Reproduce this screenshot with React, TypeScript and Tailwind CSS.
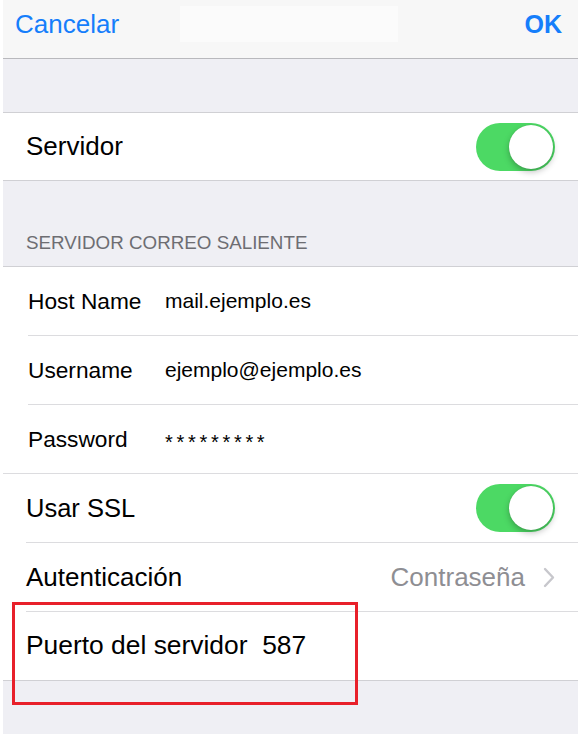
import React from "react";

function Toggle() {
  return (
    <div className="relative w-[79px] h-[48px] rounded-full bg-[#4cd964] shrink-0">
      <div className="absolute right-[2px] top-[2px] w-[44px] h-[44px] rounded-full bg-white shadow-[0_3px_6px_rgba(0,0,0,0.25),0_0_1px_rgba(0,0,0,0.2)]" />
    </div>
  );
}

function FieldRow({ label, value, mono }: { label: string; value: string; mono?: boolean }) {
  return (
    <div className="h-[68px] flex items-center pl-[25px]">
      <div className="w-[137px] text-[22.7px] text-black shrink-0">{label}</div>
      <div className={mono ? "text-[20px] tracking-[3.7px] text-black pt-[6px]" : "text-[21px] text-black"}>
        {value}
      </div>
    </div>
  );
}

export default function App() {
  return (
    <div
      className="relative w-[583px] h-[734px] bg-white overflow-hidden"
      style={{ fontFamily: '"Liberation Sans", Arial, sans-serif' }}
    >
      <div className="ml-[3px] w-[575px] h-full bg-[#efeff4] flex flex-col">
        {/* Nav */}
        <div className="h-[59px] bg-[#f7f7f7] border-b border-[#b9b9bd] flex items-center justify-between pl-[12px] pr-[16px] relative">
          <span className="text-[26px] text-[#157efb] -mt-[9px]">Cancelar</span>
          <div className="absolute left-[177px] top-[6px] w-[218px] h-[36px] bg-[#fbfbfb]" />
          <span className="text-[25px] font-bold text-[#157efb] -mt-[9px]">OK</span>
        </div>

        {/* spacer */}
        <div className="h-[53px]" />

        {/* Servidor */}
        <div className="bg-white border-y border-[#d0d0d4] h-[69px] flex items-center justify-between pl-[23px] pr-[23px]">
          <span className="text-[26px] text-black">Servidor</span>
          <Toggle />
        </div>

        {/* Section header */}
        <div className="h-[85px] flex items-end pl-[23px] pb-[9px]">
          <span className="text-[18.8px] text-[#6d6d72]">SERVIDOR CORREO SALIENTE</span>
        </div>

        {/* Group */}
        <div className="bg-white border-y border-[#d0d0d4] flex flex-col">
          <FieldRow label="Host Name" value="mail.ejemplo.es" />
          <div className="ml-[25px] h-px bg-[#dcdcdf]" />
          <FieldRow label="Username" value="ejemplo@ejemplo.es" />
          <div className="ml-[25px] h-px bg-[#dcdcdf]" />
          <FieldRow label="Password" value="*********" mono />
          <div className="h-px bg-[#dcdcdf]" />

          <div className="h-[68px] flex items-center justify-between pl-[23px] pr-[23px]">
            <span className="text-[25.5px] text-black">Usar SSL</span>
            <Toggle />
          </div>
          <div className="ml-[23px] h-px bg-[#dcdcdf]" />

          <div className="h-[68px] flex items-center justify-between pl-[23px] pr-[23px]">
            <span className="text-[26px] text-black">Autenticación</span>
            <div className="flex items-center gap-[18px]">
              <span className="text-[26px] text-[#8e8e93]">Contraseña</span>
              <svg width="12" height="21" viewBox="0 0 12 21" fill="none">
                <path d="M2 2l8 8.5L2 19" stroke="#c7c7cc" strokeWidth="2.4" strokeLinecap="round" strokeLinejoin="round" />
              </svg>
            </div>
          </div>
          <div className="ml-[23px] h-px bg-[#dcdcdf]" />

          <div className="h-[68px] flex items-center pl-[23px] pr-[23px]">
            <span className="text-[26.4px] text-black whitespace-pre">Puerto del servidor  587</span>
          </div>
        </div>
      </div>

      {/* Red highlight box */}
      <div className="absolute left-[12px] top-[602px] w-[346px] h-[103px] border-[3px] border-[#e8202a]" />
    </div>
  );
}
